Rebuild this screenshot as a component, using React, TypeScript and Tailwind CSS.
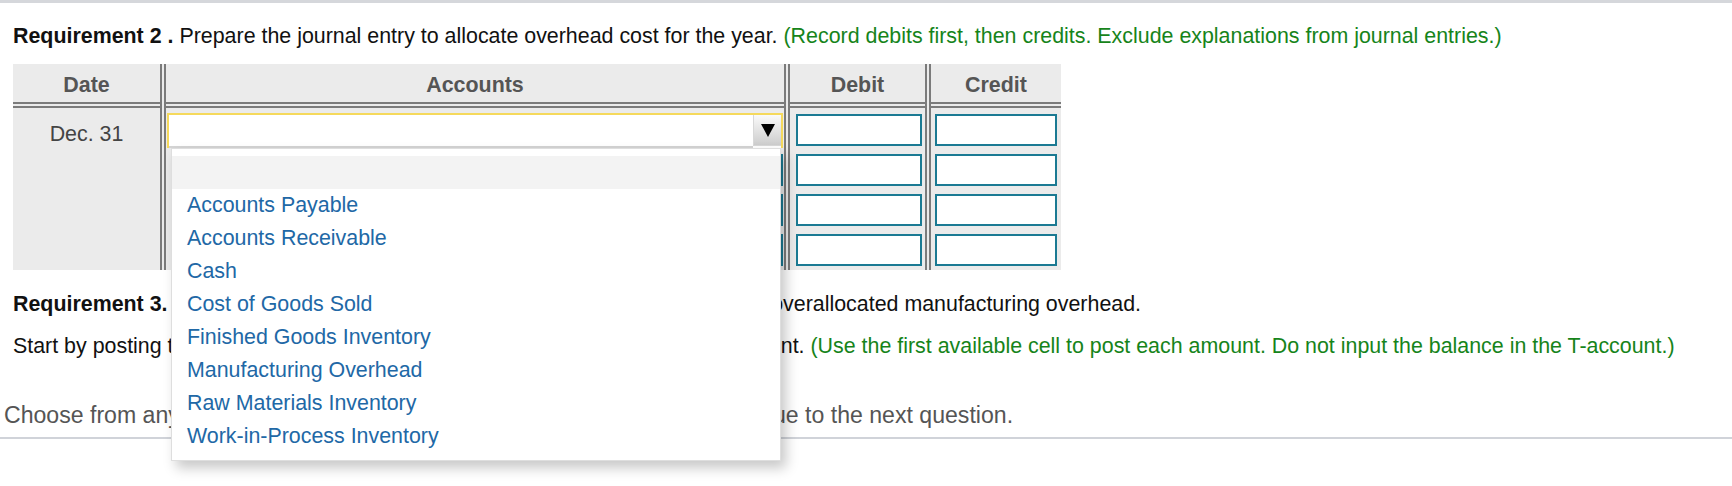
import { useState } from "react";

const accounts = [
  "Accounts Payable",
  "Accounts Receivable",
  "Cash",
  "Cost of Goods Sold",
  "Finished Goods Inventory",
  "Manufacturing Overhead",
  "Raw Materials Inventory",
  "Work-in-Process Inventory",
];

function AmountInput() {
  return <input type="text" className="block h-[32px] w-full border-2 border-[#1b7a93] bg-white px-1 outline-none" />;
}

function AccountSelect() {
  const [open] = useState(true);
  return (
    <div className="relative">
      <div className="flex h-[35px] border-2 border-b-0 border-[#f5d95c] bg-white">
        <div className="flex-1 border-b-2 border-[#d4d4d4]" />
        <div className="flex h-[31px] w-[28px] items-center justify-center border-b border-l border-[#d8d8d8] bg-gradient-to-b from-[#fafafa] to-[#cdcdcd]">
          <svg width="14" height="13" viewBox="0 0 14 13">
            <polygon points="0,0 14,0 7,13" fill="#000" />
          </svg>
        </div>
      </div>
      {open && (
        <ul className="absolute left-[4px] top-[35px] z-10 h-[313px] w-[610px] border border-[#dedede] bg-white pt-[7px] shadow-[5px_7px_12px_rgba(0,0,0,0.22)]">
          <li className="h-[33px] bg-[#f3f3f3]" />
          {accounts.map((name) => (
            <li key={name} className="flex h-[33px] items-center pl-[15px] text-[21.4px] text-[#2168a6]">
              {name}
            </li>
          ))}
        </ul>
      )}
    </div>
  );
}

export default function App() {
  const rows = [0, 1, 2, 3];
  return (
    <div className="min-h-screen bg-white font-['Liberation_Sans',Arial,sans-serif] text-[#111]">
      <div className="h-[3px] bg-[#d5d7db]" />

      <p className="mt-[21px] whitespace-nowrap pl-[13px] text-[21.4px] leading-[24px]">
        <span className="font-bold">Requirement 2 .</span> Prepare the journal entry to allocate overhead cost for the
        year. <span className="text-[#16841a]">(Record debits first, then credits. Exclude explanations from journal entries.)</span>
      </p>

      <div className="ml-[13px] mt-[16px] flex w-[1048px] bg-[#ebebeb]">
        <div className="w-[153px] border-r-[6px] border-double border-[#7b7b7b]">
          <div className="flex h-[44px] items-center justify-center border-b-[6px] border-double border-[#7b7b7b] pt-[4px] text-[21.4px] font-bold text-[#555]">
            Date
          </div>
          <div className="pt-[10px] text-center text-[21.4px] text-[#444]">Dec. 31</div>
        </div>

        <div className="w-[624px] border-r-[6px] border-double border-[#7b7b7b]">
          <div className="flex h-[44px] items-center justify-center border-b-[6px] border-double border-[#7b7b7b] pt-[4px] text-[21.4px] font-bold text-[#555]">
            Accounts
          </div>
          <div className="flex flex-col pb-[4px] pl-[1px] pr-[1px] pt-[5px]">
            <AccountSelect />
            <div className="mt-[6px] flex flex-col gap-[8px] pl-[5px]">
              {rows.slice(1).map((r) => (
                <AmountInput key={r} />
              ))}
            </div>
          </div>
        </div>

        <div className="w-[141px] border-r-[6px] border-double border-[#7b7b7b]">
          <div className="flex h-[44px] items-center justify-center border-b-[6px] border-double border-[#7b7b7b] pt-[4px] text-[21.4px] font-bold text-[#555]">
            Debit
          </div>
          <div className="flex flex-col gap-[8px] pb-[4px] pl-[6px] pr-[3px] pt-[6px]">
            {rows.map((r) => (
              <AmountInput key={r} />
            ))}
          </div>
        </div>

        <div className="w-[130px]">
          <div className="flex h-[44px] items-center justify-center border-b-[6px] border-double border-[#7b7b7b] pt-[4px] text-[21.4px] font-bold text-[#555]">
            Credit
          </div>
          <div className="flex flex-col gap-[8px] px-[4px] pb-[4px] pt-[6px]">
            {rows.map((r) => (
              <AmountInput key={r} />
            ))}
          </div>
        </div>
      </div>

      <p className="mt-[22px] whitespace-nowrap pl-[13px] text-[21.4px] leading-[24px]">
        <span className="font-bold">Requirement 3.</span> Post the entry to the T-account and compute underallocated or
        overallocated manufacturing overhead.
      </p>

      <p className="mt-[18px] whitespace-nowrap pl-[13px] text-[21.4px] leading-[24px]">
        Start by posting the journal entry amount to the Manufacturing Overhead T-account.{" "}
        <span className="text-[#16841a]">
          (Use the first available cell to post each amount. Do not input the balance in the T-account.)
        </span>
      </p>

      <p className="mt-[43px] whitespace-nowrap pl-[4px] text-[23.1px] leading-[28px] text-[#555]">
        Choose from any list or enter any number in the input fields and then continue to the next question.
      </p>
      <div className="mt-[8px] h-[2px] bg-[#d0d3d9]" />
    </div>
  );
}
